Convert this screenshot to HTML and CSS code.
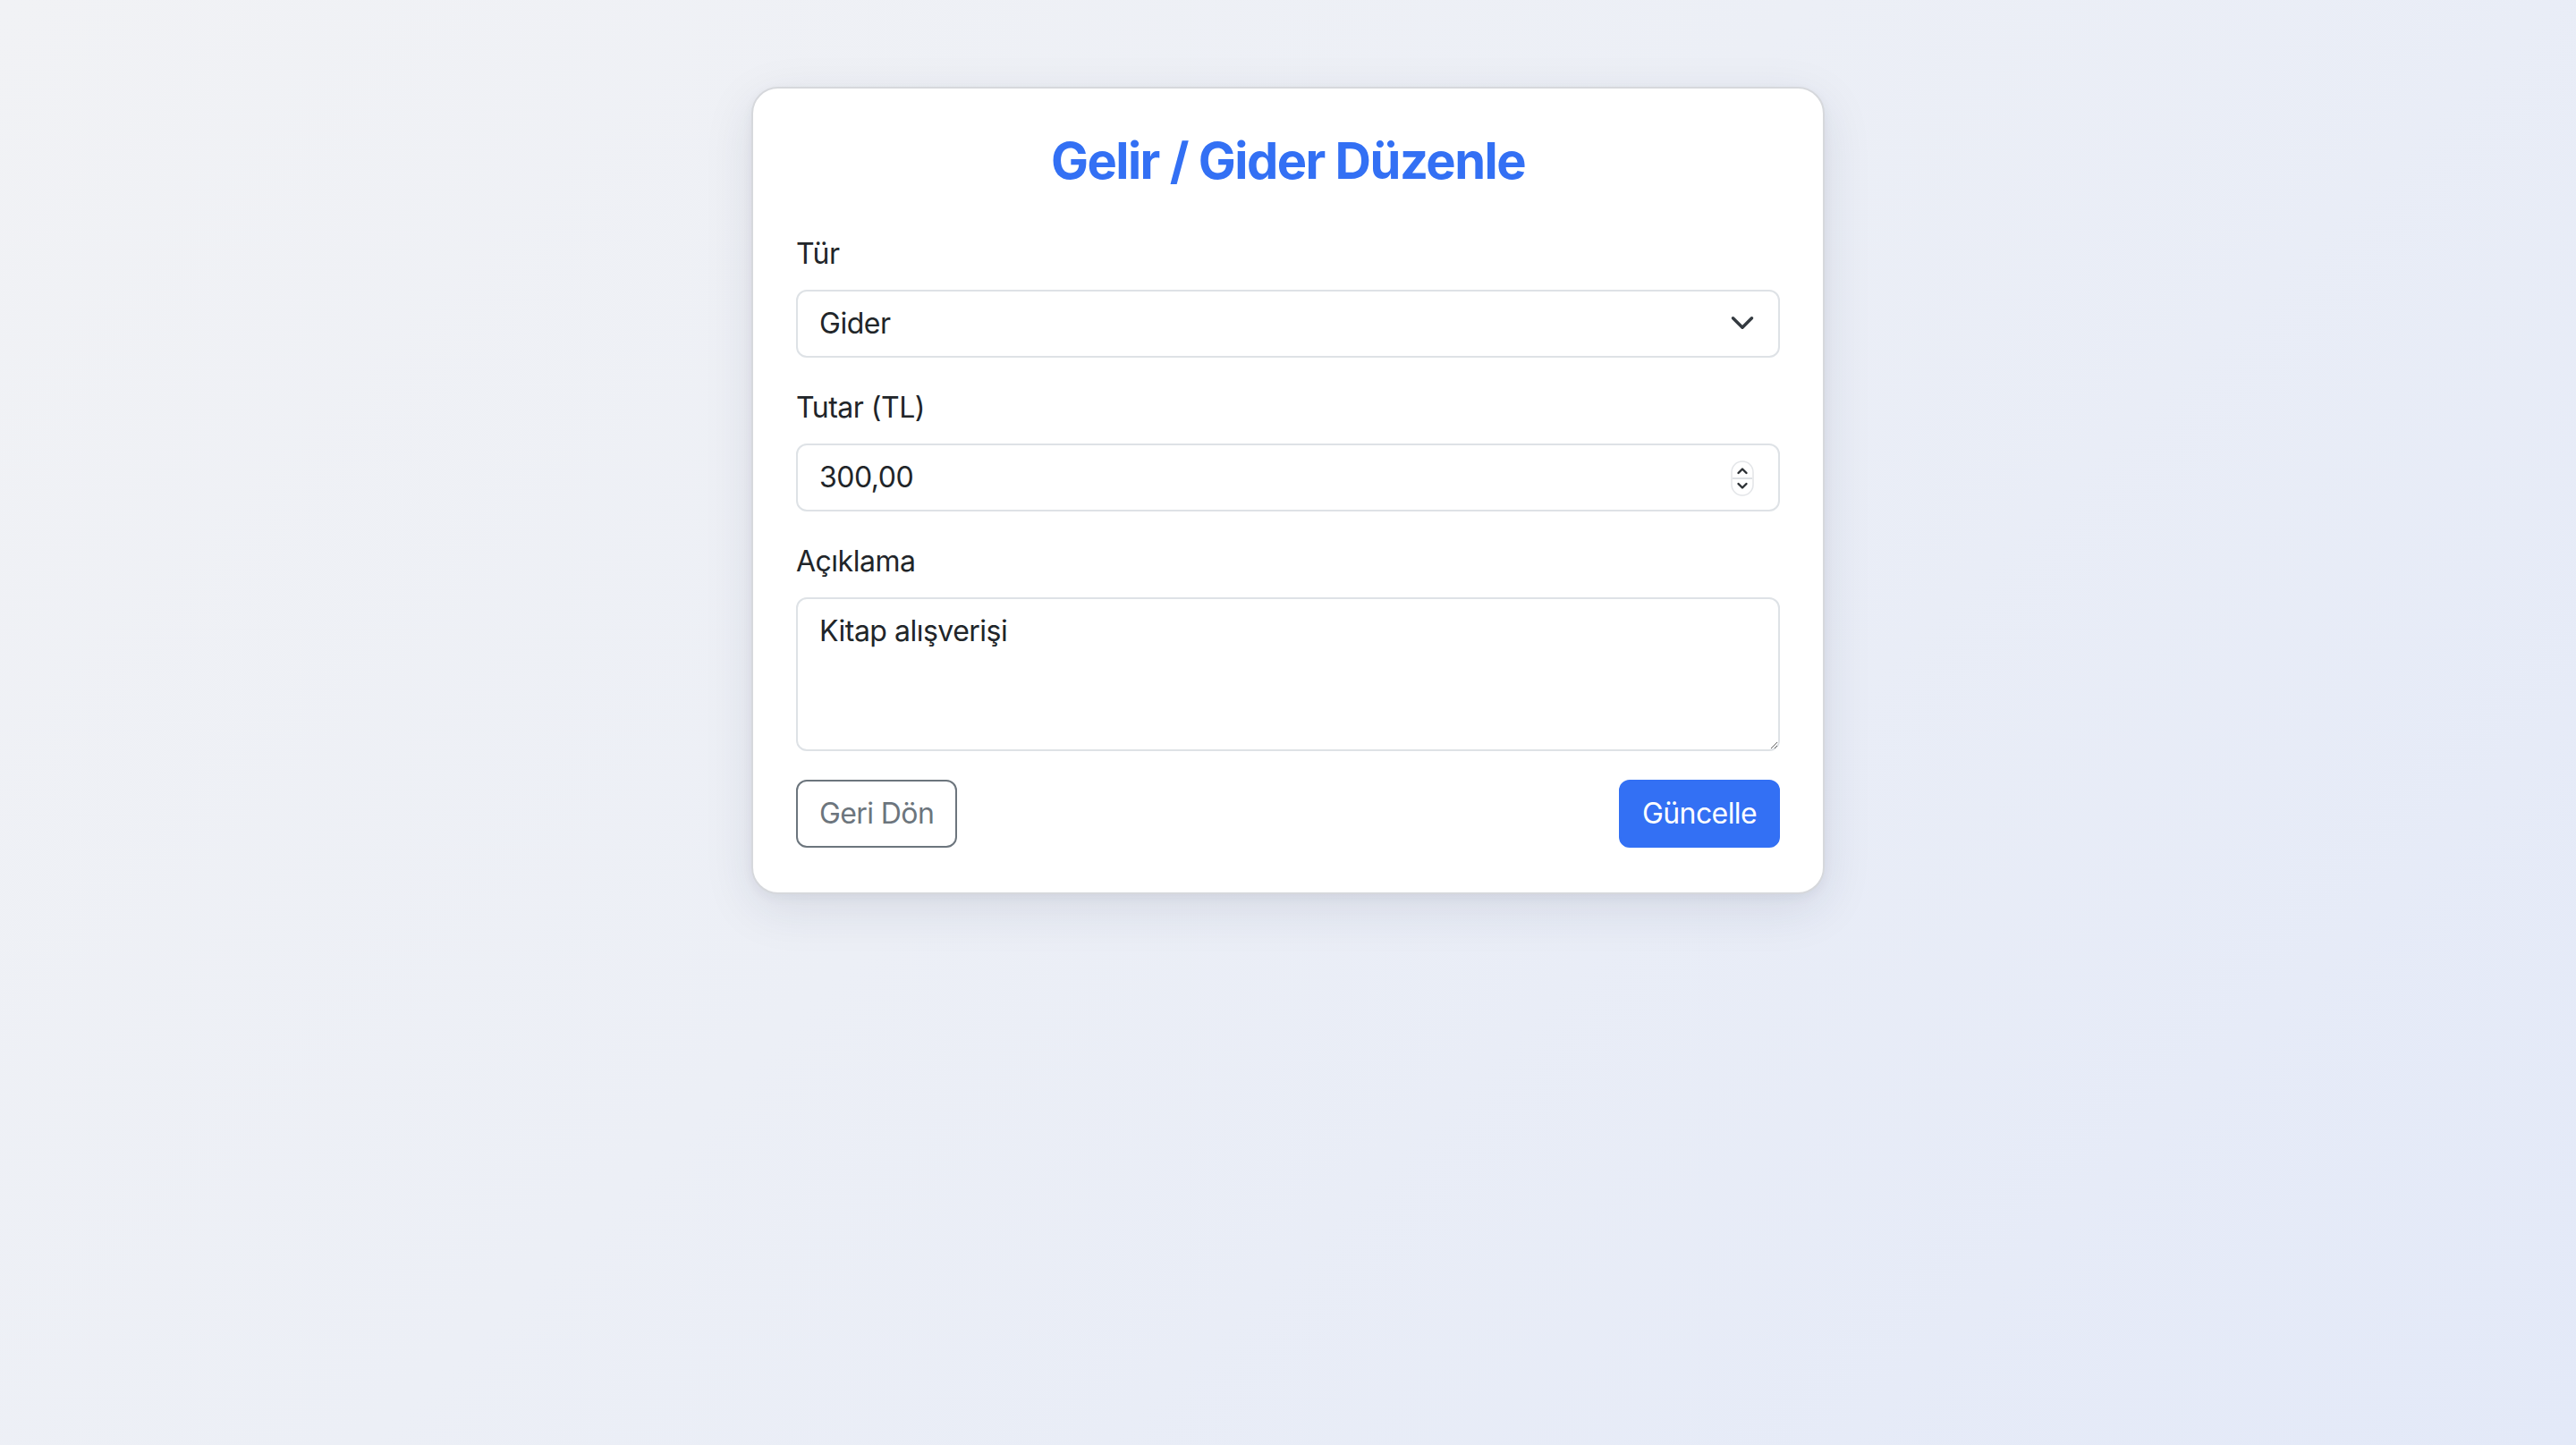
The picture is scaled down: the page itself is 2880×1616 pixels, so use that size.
FILE: index.html
```html
<!DOCTYPE html>
<html lang="tr">
<head>
<meta charset="utf-8">
<title>Gelir / Gider Düzenle</title>
<link rel="stylesheet" href="styles.css">
</head>
<body>
<main class="page">
  <form class="card">
    <h2 class="card-title">Gelir / Gider Düzenle</h2>

    <div class="field">
      <label class="label" for="tur">Tür</label>
      <div class="select-wrap">
        <select id="tur" class="control select">
          <option>Gelir</option>
          <option selected>Gider</option>
        </select>
        <svg class="chevron" viewBox="0 0 16 16" aria-hidden="true"><path d="M2 5l6 6 6-6" fill="none" stroke="#343a40" stroke-width="2" stroke-linecap="round" stroke-linejoin="round"/></svg>
      </div>
    </div>

    <div class="field">
      <label class="label" for="tutar">Tutar (TL)</label>
      <div class="number-wrap">
        <input id="tutar" class="control" type="text" inputmode="decimal" value="300,00">
        <span class="spinner" aria-hidden="true">
          <svg viewBox="0 0 26 40">
            <rect x="1" y="1" width="24" height="38" rx="12" fill="#fff" stroke="#e3e5e8" stroke-width="1.5"/>
            <line x1="2" y1="20" x2="24" y2="20" stroke="#d5d8dc" stroke-width="1.5"/>
            <path d="M8.5 14l4.5-4.5 4.5 4.5" fill="none" stroke="#2b2f33" stroke-width="2.4" stroke-linecap="round" stroke-linejoin="round"/>
            <path d="M8.5 26l4.5 4.5 4.5-4.5" fill="none" stroke="#2b2f33" stroke-width="2.4" stroke-linecap="round" stroke-linejoin="round"/>
          </svg>
        </span>
      </div>
    </div>

    <div class="field">
      <label class="label" for="aciklama">Açıklama</label>
      <textarea id="aciklama" class="control textarea" rows="3">Kitap alışverişi</textarea>
    </div>

    <div class="actions">
      <button type="button" class="btn btn-outline">Geri Dön</button>
      <button type="submit" class="btn btn-primary">Güncelle</button>
    </div>
  </form>
</main>
</body>
</html>
```

FILE: styles.css
```css
* {
  box-sizing: border-box;
}

html, body {
  margin: 0;
  padding: 0;
}

body {
  min-height: 100vh;
  font-family: Inter, "Liberation Sans", sans-serif;
  color: #212529;
  background: linear-gradient(135deg, #f1f2f5 0%, #eceff6 45%, #e3e9f8 100%);
}

.page {
  display: flex;
  justify-content: center;
  padding-top: 97px;
}

.card {
  width: 1200px;
  background: #fff;
  border: 2px solid #d6d8dc;
  border-radius: 30px;
  padding: 48px 48px 50px;
  box-shadow: 0 16px 56px rgba(30, 40, 70, 0.10), 0 4px 12px rgba(30, 40, 70, 0.05);
  display: flex;
  flex-direction: column;
}

.card-title {
  margin: 0 0 46px;
  text-align: center;
  font-size: 56px;
  font-weight: 700;
  line-height: 1.2;
  letter-spacing: -1.5px;
  color: #3370f4;
}

.field {
  display: flex;
  flex-direction: column;
  margin-bottom: 32px;
}

.label {
  font-size: 32px;
  line-height: 48px;
  letter-spacing: -0.5px;
  margin-bottom: 16px;
  color: #212529;
}

.control {
  width: 100%;
  font-family: Inter, "Liberation Sans", sans-serif;
  font-size: 32px;
  line-height: 48px;
  letter-spacing: -0.5px;
  color: #212529;
  background: #fff;
  border: 2px solid #dee2e6;
  border-radius: 12px;
  padding: 12px 24px;
  outline: none;
  margin: 0;
}

.select-wrap,
.number-wrap {
  position: relative;
}

.select {
  appearance: none;
  -webkit-appearance: none;
  height: 76px;
  padding-right: 80px;
}

.chevron {
  position: absolute;
  right: 28px;
  top: 50%;
  width: 28px;
  height: 28px;
  margin-top: -15px;
  pointer-events: none;
}

.spinner {
  position: absolute;
  right: 29px;
  top: 50%;
  width: 26px;
  height: 40px;
  margin-top: -19px;
  display: block;
}

.spinner svg {
  display: block;
  width: 26px;
  height: 40px;
}

.textarea {
  height: 172px;
  resize: vertical;
  display: block;
}

.actions {
  display: flex;
  justify-content: space-between;
  align-items: center;
}

.btn {
  font-family: Inter, "Liberation Sans", sans-serif;
  font-size: 32px;
  line-height: 48px;
  letter-spacing: -0.6px;
  padding: 12px 24px;
  border-radius: 12px;
  border: 2px solid transparent;
  cursor: pointer;
  height: 76px;
}

.btn-outline {
  color: #6c757d;
  background: #fff;
  border-color: #6c757d;
}

.btn-primary {
  color: #fff;
  background: #3370f4;
  border-color: #3370f4;
}
```
